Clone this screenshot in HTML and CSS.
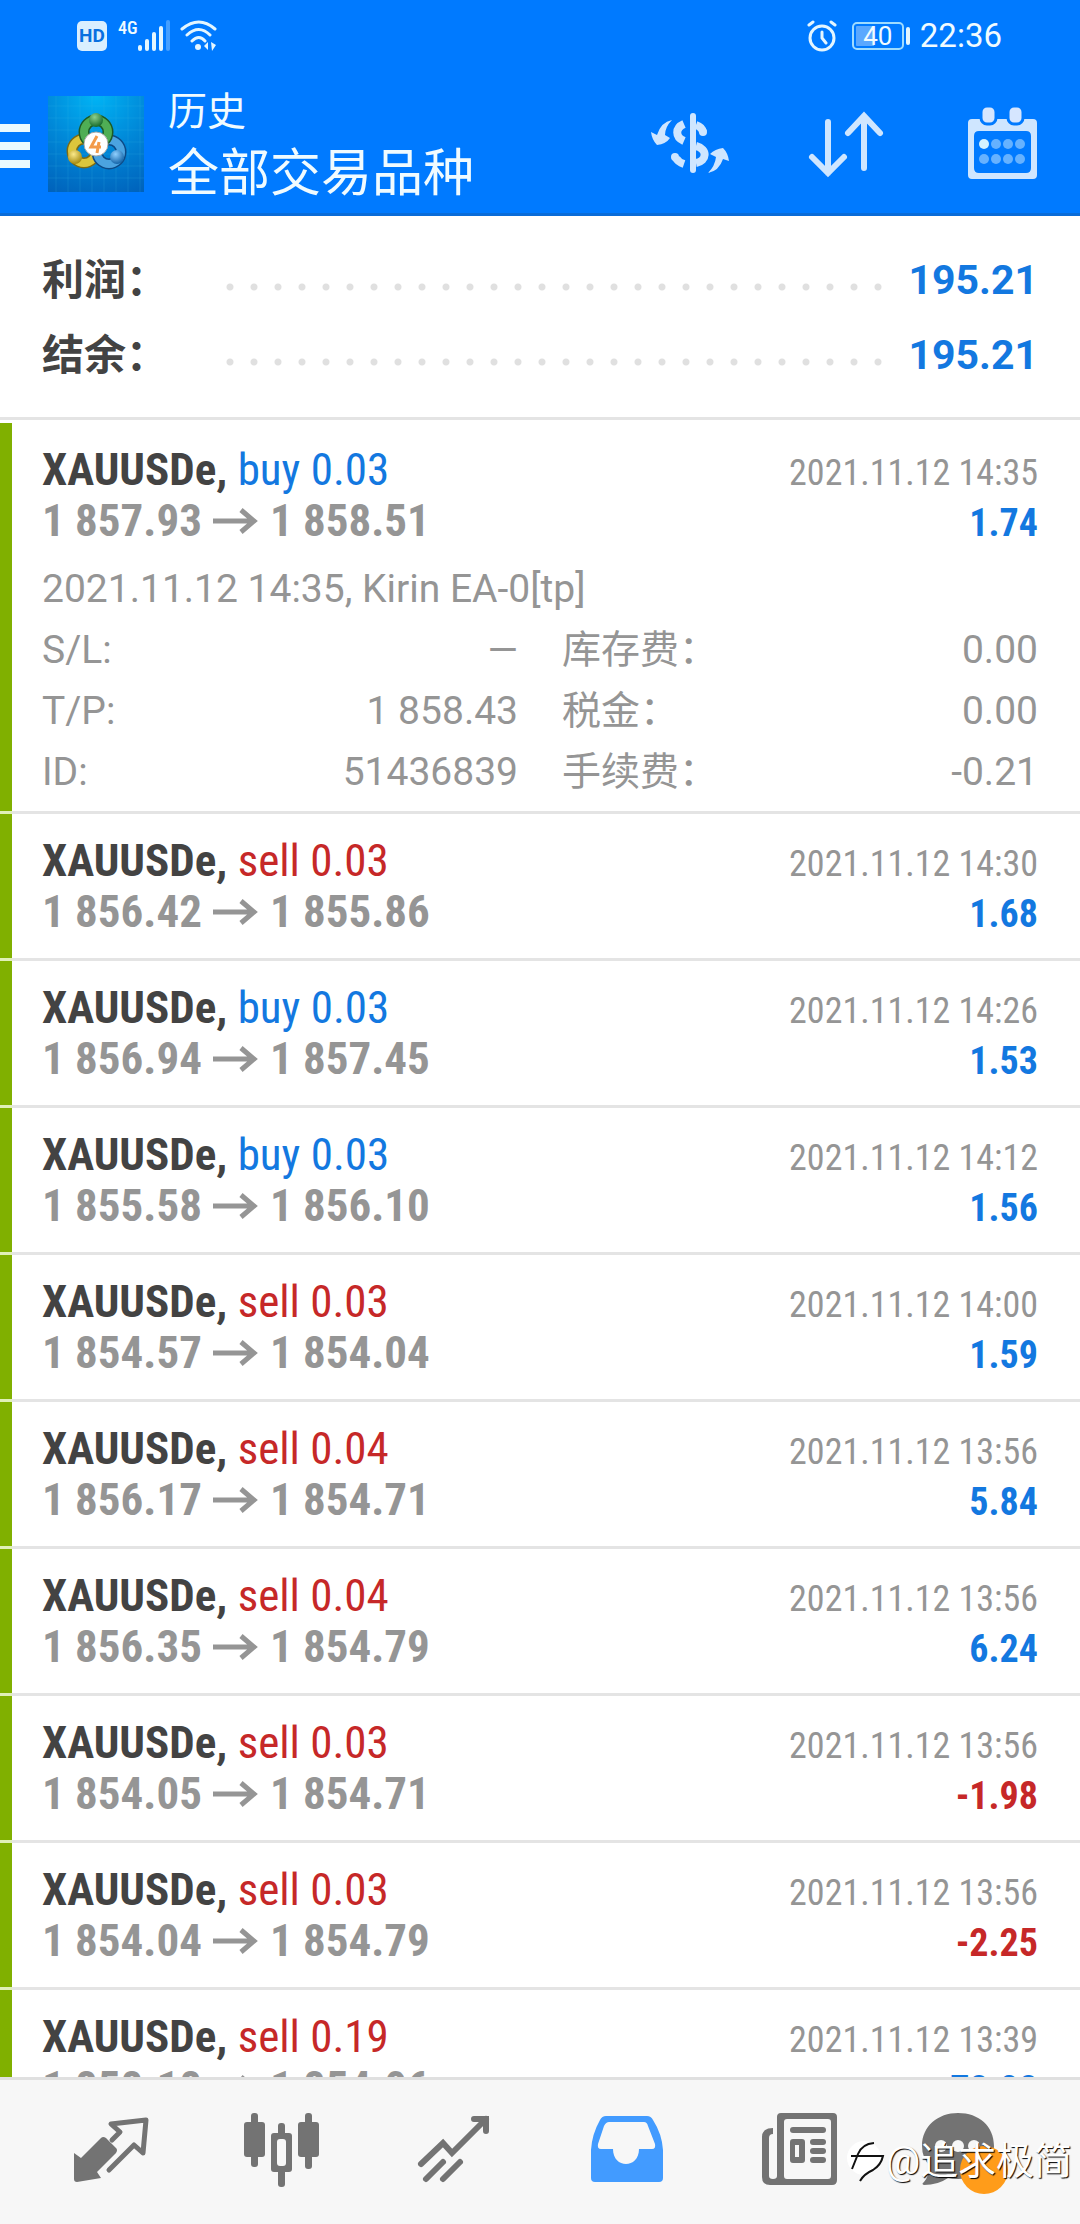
FILE: index.html
```html
<!DOCTYPE html>
<html lang="zh-CN">
<head>
<meta charset="utf-8">
<meta name="viewport" content="width=device-width, initial-scale=1">
<title>历史</title>
<link rel="stylesheet" href="styles.css">
</head>
<body>
<div class="app">
  <header class="header">
    <div class="status">
      <div class="status-group">
        <span class="hd">HD</span>
        <span class="net">4G</span>
        <svg class="signal" viewBox="0 0 34 32" width="34" height="32" fill="#e4f6ff">
          <rect x="0" y="25" width="4" height="6" rx="2"/><rect x="7" y="19" width="4" height="12" rx="2"/><rect x="14" y="12" width="4" height="19" rx="2"/><rect x="21" y="6" width="4" height="25" rx="2"/><rect x="28" y="0" width="4" height="31" rx="2" opacity=".3"/>
        </svg>
        <svg class="wifi" viewBox="0 0 38 32" width="38" height="32" fill="none" stroke="#e4f6ff" stroke-width="3" stroke-linecap="round">
          <path d="M2 9Q19-5 35 9M7 15Q19 4 30 15M12 21Q19 14 25 21"/>
          <circle cx="18" cy="27" r="3" fill="#e4f6ff" stroke="none"/>
          <path d="M28 22v8l-4-4zM31 22l5 3-4 6z" fill="#e4f6ff" stroke="none"/>
        </svg>
      </div>
      <div class="status-group">
        <svg viewBox="0 0 32 32" width="32" height="32" fill="none" stroke="#e4f6ff" stroke-width="3" stroke-linecap="round">
          <circle cx="16" cy="18" r="12"/><path d="M16 12v6l4 5M3 5l4-3M29 5l-4-3"/>
        </svg>
        <span class="battery"><span class="battery-box">40</span><span class="battery-cap"></span></span>
        <time class="clock">22:36</time>
      </div>
    </div>
    <div class="toolbar">
      <button class="menu" aria-label="菜单"><span></span><span></span><span></span></button>
      <svg class="logo" viewBox="0 0 96 96" width="96" height="96">
        <defs>
          <radialGradient id="sky" cx=".5" cy="0" r="1.1"><stop offset="0" stop-color="#00b4f5"/><stop offset=".5" stop-color="#0088d8"/><stop offset="1" stop-color="#0062bb"/></radialGradient>
          <radialGradient id="gr" cx=".4" cy=".3" r=".7"><stop offset="0" stop-color="#8cd08c"/><stop offset="1" stop-color="#176b2c"/></radialGradient>
          <radialGradient id="ye" cx=".4" cy=".3" r=".7"><stop offset="0" stop-color="#fbe98a"/><stop offset="1" stop-color="#a58a10"/></radialGradient>
          <radialGradient id="bl" cx=".4" cy=".3" r=".7"><stop offset="0" stop-color="#8fd0ff"/><stop offset="1" stop-color="#1464a8"/></radialGradient>
        </defs>
        <rect width="96" height="96" fill="url(#sky)"/>
        <path d="M8 0V96M20 0V96M32 0V96M44 0V96M56 0V96M68 0V96M80 0V96M92 0V96M0 10H96M0 22H96M0 34H96M0 46H96M0 58H96M0 70H96M0 82H96" stroke="#3fc0f0" stroke-opacity=".18"/>
        <g fill="none">
          <circle cx="36" cy="55" r="12" stroke="#7d6b14" stroke-width="11"/><circle cx="36" cy="55" r="12" stroke="#dcc63c" stroke-width="8"/>
          <circle cx="61" cy="56" r="12" stroke="#0d4a86" stroke-width="11"/><circle cx="61" cy="56" r="12" stroke="#4ba3e0" stroke-width="8"/>
          <circle cx="48" cy="36" r="12" stroke="#1d5a25" stroke-width="11"/><circle cx="48" cy="36" r="12" stroke="#4fae55" stroke-width="8"/>
        </g>
        <circle cx="48" cy="24" r="7" fill="url(#gr)"/><circle cx="27" cy="61" r="7" fill="url(#ye)"/><circle cx="69" cy="61" r="7" fill="url(#bl)"/>
        <circle cx="48" cy="48" r="12" fill="#fff" stroke="#aaa" stroke-width="1"/>
        <path d="M49 40L43 51H53M51 46L49 57" fill="none" stroke="#f39a4a" stroke-width="3"/>
      </svg>
      <div class="titles">
        <h1>历史</h1>
        <p>全部交易品种</p>
      </div>
      <div class="actions">
        <button aria-label="货币">
          <svg viewBox="0 0 80 80" width="80" height="80" fill="#cfe6ff">
            <rect x="40" y="9" width="6" height="60" rx="3"/>
            <g fill="none" stroke="#cfe6ff" stroke-width="8">
              <path d="M34 20C25 24 25 33 34 37M46 42C58 45 57 57 46 59"/>
              <path d="M26 54Q28 58 34 60" /><path d="M46 21Q52 23 53 28"/>
            </g>
            <circle cx="25" cy="53" r="4"/><circle cx="53" cy="28" r="4"/>
            <path d="M1 28L7 31Q11 18 22 16Q15 23 15 31L20 34Q16 40 7 41Q2 36 1 28Z"/>
            <path d="M79 57L73 55Q69 67 58 69Q65 62 66 53L60 50Q65 45 73 44Q78 49 79 57Z"/>
          </svg>
        </button>
        <button aria-label="排序">
          <svg viewBox="0 0 80 80" width="80" height="80" fill="none" stroke="#cfe6ff" stroke-width="6" stroke-linecap="round">
            <path d="M22 18V69M6 53L22 69L38 53M58 64V12M42 29L58 12L74 29"/>
          </svg>
        </button>
        <button aria-label="日历">
          <svg viewBox="0 0 80 80" width="80" height="80">
            <path fill="#cfe6ff" fill-rule="evenodd" d="M10 15H71Q75 15 75 19V71Q75 75 71 75H10Q6 75 6 71V19Q6 15 10 15ZM17 27Q12 27 12 32V64Q12 69 17 69H64Q69 69 69 64V32Q69 27 64 27Z"/>
            <g fill="#d6e6ff" stroke="#007aff" stroke-width="3"><rect x="19" y="2" width="15" height="18" rx="6"/><rect x="46" y="2" width="15" height="18" rx="6"/></g>
            <g fill="#66b2ff"><circle cx="34" cy="40" r="5"/><circle cx="46" cy="40" r="5"/><circle cx="58" cy="40" r="5"/><circle cx="22" cy="55" r="5"/><circle cx="34" cy="55" r="5"/><circle cx="46" cy="55" r="5"/><circle cx="58" cy="55" r="5"/></g>
            <circle cx="22" cy="40" r="5" fill="#d4f2ff"/>
          </svg>
        </button>
      </div>
    </div>
  </header>

  <dl class="summary">
    <div><dt>利润：</dt><dd class="dots" aria-hidden="true"></dd><dd class="total">195.21</dd></div>
    <div><dt>结余：</dt><dd class="dots" aria-hidden="true"></dd><dd class="total">195.21</dd></div>
  </dl>

  <svg class="defs" width="0" height="0"><symbol id="arrow" viewBox="0 0 46 26"><path d="M0 13H42M28 2L41 13L28 24" fill="none" stroke="currentColor" stroke-width="5"/></symbol></svg>

  <ul class="deals">
    <li>
      <div class="line"><span class="symbol">XAUUSDe, <b class="buy">buy 0.03</b></span><time>2021.11.12 14:35</time></div>
      <div class="line"><span class="price">1 857.93<svg><use href="#arrow"/></svg>1 858.51</span><span class="gain">1.74</span></div>
      <div class="details">
        <p>2021.11.12 14:35, Kirin EA-0[tp]</p>
        <dl>
          <div><dt>S/L:</dt><dd>—</dd></div><div><dt>库存费：</dt><dd>0.00</dd></div>
          <div><dt>T/P:</dt><dd>1 858.43</dd></div><div><dt>税金：</dt><dd>0.00</dd></div>
          <div><dt>ID:</dt><dd>51436839</dd></div><div><dt>手续费：</dt><dd>-0.21</dd></div>
        </dl>
      </div>
    </li>
    <li>
      <div class="line"><span class="symbol">XAUUSDe, <b class="sell">sell 0.03</b></span><time>2021.11.12 14:30</time></div>
      <div class="line"><span class="price">1 856.42<svg><use href="#arrow"/></svg>1 855.86</span><span class="gain">1.68</span></div>
    </li>
    <li>
      <div class="line"><span class="symbol">XAUUSDe, <b class="buy">buy 0.03</b></span><time>2021.11.12 14:26</time></div>
      <div class="line"><span class="price">1 856.94<svg><use href="#arrow"/></svg>1 857.45</span><span class="gain">1.53</span></div>
    </li>
    <li>
      <div class="line"><span class="symbol">XAUUSDe, <b class="buy">buy 0.03</b></span><time>2021.11.12 14:12</time></div>
      <div class="line"><span class="price">1 855.58<svg><use href="#arrow"/></svg>1 856.10</span><span class="gain">1.56</span></div>
    </li>
    <li>
      <div class="line"><span class="symbol">XAUUSDe, <b class="sell">sell 0.03</b></span><time>2021.11.12 14:00</time></div>
      <div class="line"><span class="price">1 854.57<svg><use href="#arrow"/></svg>1 854.04</span><span class="gain">1.59</span></div>
    </li>
    <li>
      <div class="line"><span class="symbol">XAUUSDe, <b class="sell">sell 0.04</b></span><time>2021.11.12 13:56</time></div>
      <div class="line"><span class="price">1 856.17<svg><use href="#arrow"/></svg>1 854.71</span><span class="gain">5.84</span></div>
    </li>
    <li>
      <div class="line"><span class="symbol">XAUUSDe, <b class="sell">sell 0.04</b></span><time>2021.11.12 13:56</time></div>
      <div class="line"><span class="price">1 856.35<svg><use href="#arrow"/></svg>1 854.79</span><span class="gain">6.24</span></div>
    </li>
    <li>
      <div class="line"><span class="symbol">XAUUSDe, <b class="sell">sell 0.03</b></span><time>2021.11.12 13:56</time></div>
      <div class="line"><span class="price">1 854.05<svg><use href="#arrow"/></svg>1 854.71</span><span class="gain loss">-1.98</span></div>
    </li>
    <li>
      <div class="line"><span class="symbol">XAUUSDe, <b class="sell">sell 0.03</b></span><time>2021.11.12 13:56</time></div>
      <div class="line"><span class="price">1 854.04<svg><use href="#arrow"/></svg>1 854.79</span><span class="gain loss">-2.25</span></div>
    </li>
    <li>
      <div class="line"><span class="symbol">XAUUSDe, <b class="sell">sell 0.19</b></span><time>2021.11.12 13:39</time></div>
      <div class="line"><span class="price">1 858.18<svg><use href="#arrow"/></svg>1 854.06</span><span class="gain">78.28</span></div>
    </li>
  </ul>

  <nav class="tabs">
    <a href="#quotes" aria-label="行情">
      <svg viewBox="0 0 88 88" width="88" height="88" fill="#737373">
        <path d="M46 32L54 24L45 16L80 12L77 45L68 37L43 62" fill="none" stroke="#737373" stroke-width="5" stroke-linecap="round" stroke-linejoin="round"/>
        <path d="M35 30Q37 28 40 30L50 40Q52 42 50 45L31 64L35 70L11 74Q8 74 8 71V45L15 50Z"/>
      </svg>
    </a>
    <a href="#charts" aria-label="图表">
      <svg viewBox="0 0 88 88" width="88" height="88" fill="#737373">
        <rect x="6" y="14" width="21" height="35" rx="3"/><rect x="13" y="5" width="7" height="54" rx="3"/>
        <rect x="60" y="14" width="21" height="35" rx="3"/><rect x="67" y="5" width="7" height="56" rx="3"/>
        <rect x="40" y="15" width="7" height="64" rx="3"/><rect x="33" y="25" width="21" height="39" rx="3"/>
        <rect x="39" y="31" width="9" height="27" rx="3" fill="#f7f7f7"/>
      </svg>
    </a>
    <a href="#trade" aria-label="交易">
      <svg viewBox="0 0 88 88" width="88" height="88" fill="none" stroke="#737373" stroke-width="6" stroke-linecap="round">
        <path d="M11 56L33 35L42 45L76 11M64 11H76V23M16 71L33 54M33 71L50 54"/>
      </svg>
    </a>
    <a href="#history" aria-label="历史" aria-current="page">
      <svg viewBox="0 0 88 88" width="88" height="88" fill="#429bff">
        <path fill-rule="evenodd" d="M24 8H65Q69 8 71 12Q80 26 81 42V70Q81 74 77 74H13Q9 74 9 70V42Q10 26 18 12Q20 8 24 8ZM27 14Q24 14 22 18L16 36Q15 41 19 41H31C31 61 57 61 57 41H70Q74 41 73 36L66 18Q65 14 62 14Z"/>
      </svg>
    </a>
    <a href="#news" aria-label="新闻">
      <svg viewBox="0 0 88 88" width="88" height="88" fill="#737373">
        <path fill-rule="evenodd" d="M27 5H79Q83 5 83 9V72Q83 77 78 77H16Q8 77 8 69V29Q8 20 19 20V26Q15 26 15 30V68Q15 71 19 71Q23 71 23 68V9Q23 5 27 5ZM33 11Q30 11 30 14V68Q30 71 33 71H74Q77 71 77 68V14Q77 11 74 11Z"/>
        <rect x="36" y="19" width="36" height="6" rx="3"/>
        <path fill-rule="evenodd" d="M39 31H48Q51 31 51 34V52Q51 55 48 55H39Q36 55 36 52V34Q36 31 39 31ZM41 37V49H45V37Z"/>
        <rect x="56" y="31" width="16" height="6" rx="3"/><rect x="56" y="40" width="16" height="6" rx="3"/><rect x="56" y="49" width="16" height="6" rx="3"/>
      </svg>
    </a>
    <a href="#mail" aria-label="消息">
      <svg viewBox="-8 0 104 88" width="104" height="88">
        <path fill="#737373" d="M32 5C53 5 68 18 68 38S53 71 32 71Q26 71 22 70Q12 77-2 77Q-5 76-2 74Q3 68 4 58Q-4 50-4 38C-4 18 12 5 32 5Z"/>
        <g fill="#f7f7f7"><circle cx="15" cy="38" r="6"/><circle cx="32" cy="38" r="6"/><circle cx="48" cy="38" r="6"/></g>
        <circle cx="58" cy="62" r="24" fill="#ff9c1a"/>
      </svg>
    </a>
  </nav>
  <div class="watermark">
    <svg viewBox="0 0 40 44" width="40" height="44">
      <circle cx="18" cy="19" r="17" fill="#fff"/>
      <path d="M6 30Q10 20 12 15Q16 5 28 4M5 17H19M18 17H37Q35 26 27 31Q18 35 14 42" fill="none" stroke="#111" stroke-width="2"/>
    </svg>
    <span>@追求极简</span>
  </div>
</div>
</body>
</html>
```
FILE: styles.css
```css
* { box-sizing: border-box; margin: 0; padding: 0; }

body {
  background: #fff;
  color: #959595;
  font-family: Roboto, "Noto Sans CJK SC", sans-serif;
}

.app {
  position: relative;
  display: flex;
  flex-direction: column;
  height: 100vh;
  overflow: hidden;
}

button { border: 0; background: none; display: flex; align-items: center; justify-content: center; }
svg { display: block; flex: none; }
.defs { position: absolute; }

/* header */
.header { background: #007aff; border-bottom: 3px solid #0a6cd8; color: #f0fbff; }
.status { display: flex; justify-content: space-between; height: 72px; padding: 0 78px 0 77px; align-items: center; }
.status-group { display: flex; align-items: center; height: 32px; }
.hd {
  width: 30px; height: 30px; border-radius: 5px; background: #d9efff; color: #0870e0;
  font-size: 19px; font-weight: 700; line-height: 30px; text-align: center;
}
.net { margin-left: 11px; font-family: "Roboto Condensed", Roboto, sans-serif; font-size: 18px; font-weight: 500; line-height: 16px; align-self: flex-start; }
.wifi { margin-left: 8px; }
.battery { display: flex; align-items: center; gap: 2px; margin: 0 10px 0 14px; }
.battery-box {
  width: 52px; height: 28px; border: 2px solid #9fdcff; border-radius: 5px;
  background: linear-gradient(to right, #5aa8ff 40%, transparent 40%) content-box;
  padding: 2px; font-size: 26px; line-height: 20px; text-align: center;
}
.battery-cap { width: 4px; height: 18px; border-radius: 2px; background: #e4f6ff; }
.clock { font-size: 33px; line-height: 34px; }

.toolbar { display: flex; align-items: center; height: 141px; padding-top: 2px; }
.menu { flex-direction: column; align-items: flex-start; gap: 10px; width: 48px; padding-top: 4px; }
.menu span { width: 30px; height: 8px; background: #eafaff; }
.titles { margin-left: 24px; padding-top: 4px; flex: 1; }
.titles h1 { font-size: 39px; font-weight: 400; line-height: 56px; }
.titles p { font-size: 51px; line-height: 68px; }
.actions { display: flex; }
.actions button { width: 156px; height: 141px; }

/* totals */
.summary { padding: 27px 42px 24px; border-bottom: 3px solid #e4e4e4; }
.summary div { display: flex; align-items: center; height: 75px; font-weight: 700; font-size: 42px; line-height: 75px; }
.summary dt { width: 176px; color: #434343; }
.dots {
  flex: 1; height: 8px; margin-top: 13px; margin-right: 20px;
  background: radial-gradient(circle at 12px 4px, #e0e0e0 3px, transparent 4px) 0 0 / 24px 8px repeat-x;
}
.total { color: #1378e0; font-size: 41px; }

/* deals */
.deals {
  flex: 1; min-height: 0; overflow: hidden;
  display: flex; flex-direction: column; gap: 3px;
  border-top: 3px solid #fff;
  background: linear-gradient(to right, #e0f0b8 12px, #e4e4e4 12px);
  list-style: none;
}
.deals > li { flex: none; padding: 21px 42px 21px 30px; border-left: 12px solid #80b000; background: #fff; }
.line {
  display: flex; justify-content: space-between; align-items: baseline; height: 51px;
  font-family: "Roboto Condensed", Roboto, sans-serif; font-size: 45px; line-height: 51px;
}
.symbol { color: #434343; font-weight: 700; }
.symbol b { font-weight: 400; }
.buy { color: #1378e0; }
.sell { color: #c62828; }
.line time { font-size: 36px; }
.price { display: flex; align-items: center; gap: 11px; font-weight: 700; }
.price svg { width: 46px; height: 26px; }
.gain { color: #1378e0; font-size: 38px; font-weight: 700; }
.gain.loss { color: #c62828; }

.details { margin: 13px 0 -13px; font-size: 39px; line-height: 61px; }
.details dl { display: grid; grid-template-columns: 1fr 1fr; column-gap: 44px; }
.details dl div { display: flex; justify-content: space-between; height: 61px; }

/* bottom tabs */
.tabs { display: flex; height: 147px; padding: 0 24px; border-top: 3px solid #e0e0e0; background: #f7f7f7; }
.tabs a { flex: 1; display: flex; align-items: center; justify-content: center; }

.watermark {
  position: absolute; right: 8px; bottom: 37px;
  display: flex; align-items: center;
  color: #fff; font-size: 38px; line-height: 52px; text-shadow: 1px 1px 1px #000;
}
```
